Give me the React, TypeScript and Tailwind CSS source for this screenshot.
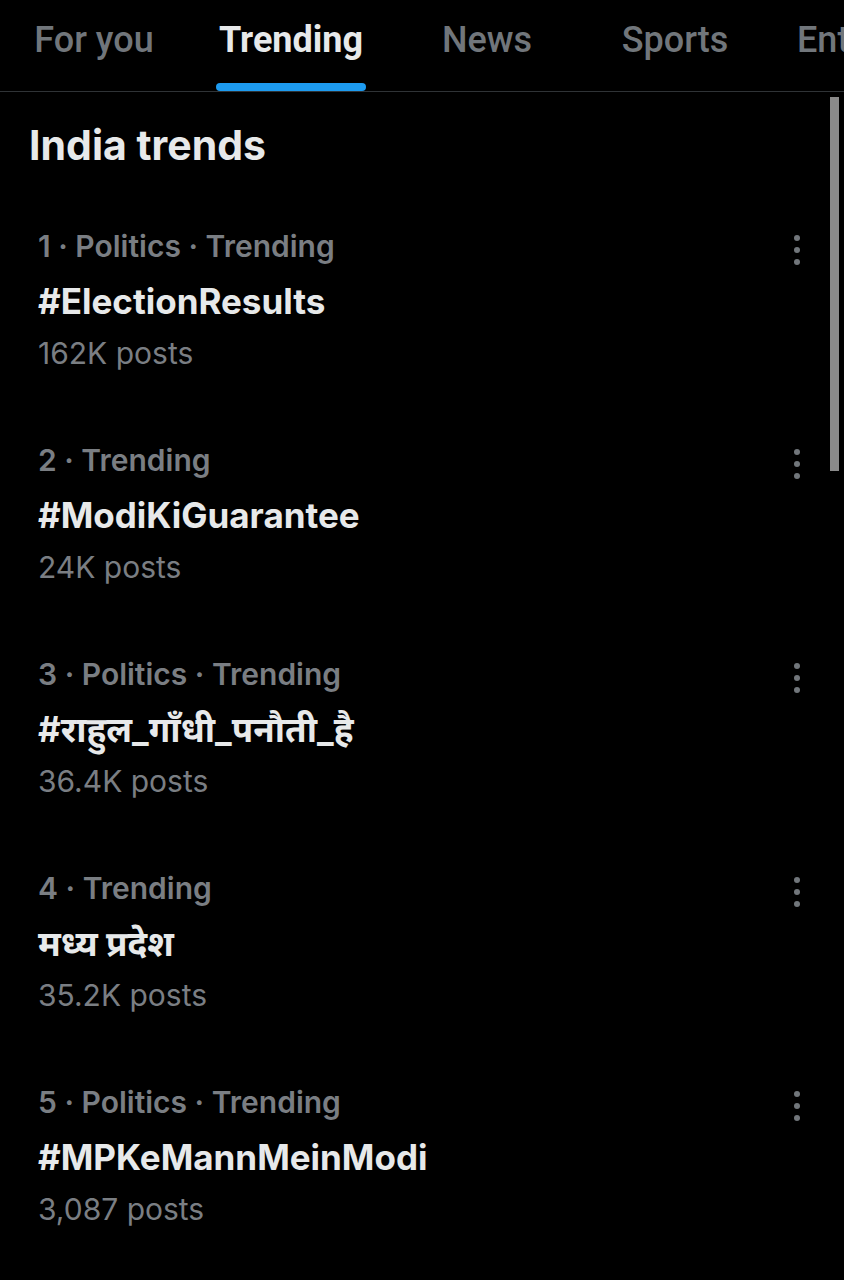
import React from "react";

const tabs = [
  { label: "For you", w: "w-[188px]", active: false },
  { label: "Trending", w: "w-[206px]", active: true },
  { label: "News", w: "w-[186px]", active: false },
  { label: "Sports", w: "w-[190px]", active: false },
];

const trends = [
  { meta: "1 · Politics · Trending", title: "#ElectionResults", posts: "162K posts" },
  { meta: "2 · Trending", title: "#ModiKiGuarantee", posts: "24K posts" },
  { meta: "3 · Politics · Trending", title: "#राहुल_गाँधी_पनौती_है", posts: "36.4K posts" },
  { meta: "4 · Trending", title: "मध्य प्रदेश", posts: "35.2K posts" },
  { meta: "5 · Politics · Trending", title: "#MPKeMannMeinModi", posts: "3,087 posts" },
];

function Dots() {
  return (
    <div className="flex flex-col items-center gap-[6px] pt-[2px]">
      <span className="block w-[6px] h-[6px] rounded-full bg-[#71767b]" />
      <span className="block w-[6px] h-[6px] rounded-full bg-[#71767b]" />
      <span className="block w-[6px] h-[6px] rounded-full bg-[#71767b]" />
    </div>
  );
}

export default function App() {
  const font = { fontFamily: 'Inter, "Noto Sans Devanagari", "Lohit Devanagari", sans-serif' };
  const tabFont = { fontFamily: 'Roboto, "Noto Sans", sans-serif' };
  return (
    <div className="relative w-[844px] h-[1280px] bg-black overflow-hidden text-[#e7e9ea]" style={font}>
      {/* Tabs */}
      <div className="flex h-[92px] border-b border-[#2f3336] whitespace-nowrap" style={tabFont}>
        {tabs.map((t) => (
          <div key={t.label} className={`${t.w} shrink-0 flex flex-col items-center`}>
            <div
              className={`mt-[17px] h-[46px] leading-[46px] text-[36px] ${
                t.active ? "font-bold text-[#e7e9ea]" : "font-medium text-[#71767b]"
              }`}
            >
              {t.label}
            </div>
            {t.active && <div className="mt-[20px] h-[8px] w-[150px] rounded-full bg-[#1d9bf0]" />}
          </div>
        ))}
        <div className="shrink-0 pl-[27px]">
          <div className="mt-[17px] h-[46px] leading-[46px] text-[36px] font-medium text-[#71767b]">Entertainment</div>
        </div>
      </div>

      {/* Header */}
      <div className="h-[129px] pt-[28px] pl-[29px]">
        <div className="text-[41px] leading-[50px] font-bold text-[#e7e9ea]">India trends</div>
      </div>

      {/* Trends */}
      <div>
        {trends.map((t) => (
          <div key={t.meta + t.title} className="h-[214px] pl-[38px] pr-[44px] flex justify-between">
            <div className="flex flex-col">
              <div className="text-[30px] leading-[50px] font-semibold text-[#7a7e83]">{t.meta}</div>
              <div className="mt-[5px] text-[35px] leading-[50px] font-bold text-[#e7e9ea]">{t.title}</div>
              <div className="mt-[2px] text-[30px] leading-[50px] text-[#7a7e83]">{t.posts}</div>
            </div>
            <div className="pt-[12px]">
              <Dots />
            </div>
          </div>
        ))}
      </div>

      {/* Scrollbar overlay */}
      <div className="absolute left-[830px] top-[97px] w-[9px] h-[374px] bg-[#8a8a8a]" />
    </div>
  );
}
